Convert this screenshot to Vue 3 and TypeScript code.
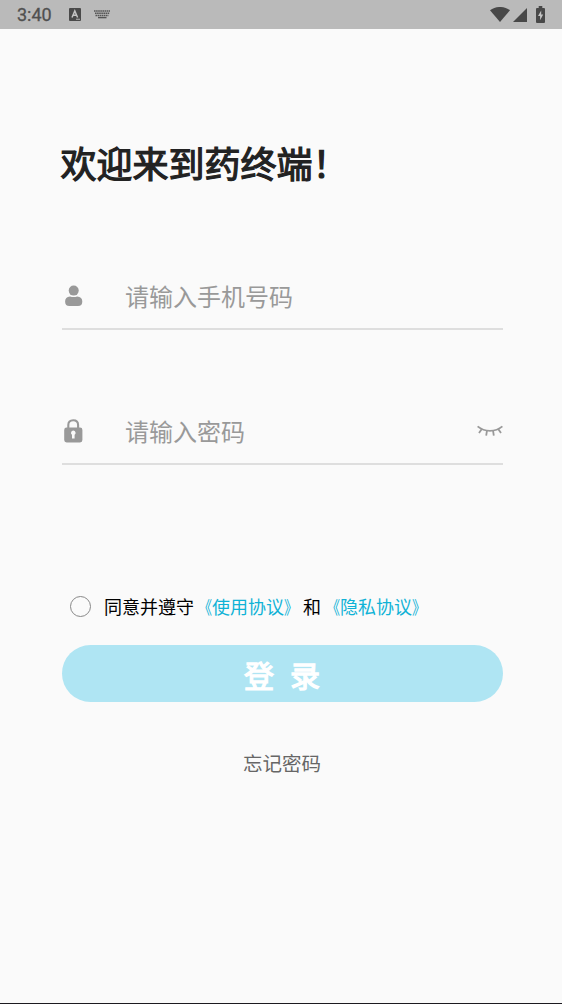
<script setup lang="ts">
import {ref} from "vue";

const phone = ref('')
const password = ref('')
const showPassword = ref(false)
const agreed = ref(false)
</script>

<template>
  <div class="page">
    <header class="status-bar">
      <span class="time">3:40</span>
      <svg class="app-icon" width="12" height="13" viewBox="0 0 12 13">
        <rect width="12" height="13" rx="1" fill="#4a4a4a"/>
        <path d="M3 9.5 L5.8 3 L8.6 9.5 M4 7.3 H7.6" fill="none" stroke="#c4c4c4" stroke-width="1.5"/>
        <path d="M7 11.3 H11" stroke="#a0a0a0" stroke-width="1.2"/>
      </svg>
      <svg class="keyboard-icon" width="16" height="9" viewBox="0 0 16 9">
        <g fill="none" stroke="#555" stroke-width="1.4">
          <path d="M0 1 H16" stroke-dasharray="1.6 .5"/>
          <path d="M1 3.3 H15.5" stroke-dasharray="1.6 .5"/>
          <path d="M1.5 5.5 H14.5" stroke-dasharray="1.6 .5"/>
          <path d="M4 7.6 H12.5"/>
        </g>
      </svg>
      <div class="system-icons">
        <svg width="20" height="15" viewBox="0 0 20 15">
          <path d="M0 3.2 C5.8 -1.1 14.2 -1.1 20 3.2 L10 15 Z" fill="#484848"/>
        </svg>
        <svg class="signal" width="14" height="14" viewBox="0 0 14 14">
          <path d="M14 0 V14 H0 Z" fill="#484848"/>
        </svg>
        <svg class="battery" width="9" height="17" viewBox="0 0 9 17">
          <path d="M2.7 0 H6.3 V2 H8 Q9 2 9 3 V16 Q9 17 8 17 H1 Q0 17 0 16 V3 Q0 2 1 2 H2.7 Z" fill="#484848"/>
          <path d="M5.2 4.5 L2 10 H4.1 V14.3 L7.2 8.6 H5.2 Z" fill="#c4c4c4"/>
        </svg>
      </div>
    </header>

    <main class="login">
      <h1>欢迎来到药终端！</h1>

      <label class="field">
        <svg class="field-icon" width="22" height="26" viewBox="0 0 22 26">
          <circle cx="11.7" cy="7.6" r="5" fill="#999"/>
          <path d="M8 13.4 Q11.6 14.4 15.2 13.4 Q20.3 13.7 20.3 18.4 Q20.3 22.9 16 22.9 H7.4 Q3.1 22.9 3.1 18.4 Q3.1 13.7 8 13.4 Z" fill="#999"/>
        </svg>
        <input v-model="phone" type="tel" placeholder="请输入手机号码">
      </label>

      <label class="field password">
        <svg class="field-icon" width="22" height="26" viewBox="0 0 22 26">
          <path d="M6.3 11 V7 Q6.3 2.2 11.2 2.2 Q16.1 2.2 16.1 7 V11" fill="none" stroke="#999" stroke-width="2.1"/>
          <rect x="2.2" y="9.6" width="18.2" height="14.8" rx="2.4" fill="#999"/>
          <path d="M11.3 12.6 a2.3 2.3 0 0 1 1.3 4.2 V20.6 H10 V16.8 a2.3 2.3 0 0 1 1.3 -4.2" fill="#fafafa"/>
        </svg>
        <input v-model="password" :type="showPassword ? 'text' : 'password'" placeholder="请输入密码">
        <svg class="eye" width="26" height="12" viewBox="0 0 26 12" @click="showPassword = !showPassword">
          <g fill="none" stroke="#999" stroke-width="1.8">
            <path d="M.6 1.4 Q6 5.8 13 5.8 Q20 5.8 25.4 1.4"/>
            <path d="M4.8 4 L2 8 M10 5.4 L9.2 10.6 M16 5.4 L16.8 10.6 M21.2 4 L24 8"/>
          </g>
        </svg>
      </label>

      <div class="agreement">
        <span class="radio" :class="{checked: agreed}" @click="agreed = !agreed"></span>
        <span>同意并遵守</span>
        <a><i class="open">《</i>使用协议<i class="close">》</i></a>
        <span class="and">和</span>
        <a><i class="open">《</i>隐私协议<i class="close">》</i></a>
      </div>

      <button class="submit"><span>登</span><span>录</span></button>
      <a class="forgot">忘记密码</a>
    </main>
  </div>
</template>

<style>
body {
  margin: 0;
  background: #fafafa;
}
</style>

<style scoped>
.page {
  height: 1004px;
  box-sizing: border-box;
  background: #fafafa;
  border-bottom: 1px solid #1c1a20;
  font-family: "Noto Sans CJK SC", sans-serif;
}

.status-bar {
  display: flex;
  align-items: center;
  height: 29px;
  padding: 0 16px 0 17px;
  box-sizing: border-box;
  background: #bababa;
}

.time {
  width: 52px;
  font: 400 18px/29px Roboto, sans-serif;
  -webkit-text-stroke: .3px #505050;
  color: #505050;
}

.keyboard-icon {
  margin-left: 13px;
}

.system-icons {
  display: flex;
  align-items: center;
  margin-left: auto;
  margin-right: 1px;
}

.signal {
  margin-left: 3px;
}

.battery {
  margin-left: 9px;
}

.login {
  display: flex;
  flex-direction: column;
  padding: 106px 59.5px 0 61.5px;
}

h1 {
  margin: 0 0 0 -1px;
  height: 54px;
  font-size: 36px;
  line-height: 54px;
  font-weight: 400;
  -webkit-text-stroke: 1.2px #222;
  color: #222;
  white-space: nowrap;
}

.field {
  display: flex;
  align-items: center;
  height: 66px;
  margin-top: 75px;
  box-sizing: border-box;
  border-bottom: 2px solid #dedede;
}

.password {
  margin-top: 69px;
}

.field-icon {
  margin-right: 41.5px;
}

input {
  flex: 1;
  min-width: 0;
  height: 40px;
  padding: 0 0 2px;
  box-sizing: border-box;
  border: none;
  outline: none;
  background: transparent;
  font-family: inherit;
  font-size: 24px;
  font-weight: 400;
  color: #222;
}

input::placeholder {
  color: #999;
  opacity: 1;
}

.agreement {
  display: flex;
  align-items: center;
  height: 28px;
  margin: 127px 0 0 8px;
  font-size: 18px;
  line-height: 28px;
  color: #000;
  white-space: nowrap;
}

.agreement a {
  color: #10b2d6;
}

/* condensed book-title marks */
.agreement i {
  display: inline-block;
  font-style: normal;
  transform: scaleX(.78);
}

.agreement .open {
  transform-origin: right;
}

.agreement .close {
  transform-origin: left;
}

.and {
  margin: 0 1px;
}

.radio {
  width: 21px;
  height: 21px;
  margin-right: 13.5px;
  box-sizing: border-box;
  border: 1px solid #888;
  border-radius: 50%;
}

.radio.checked {
  background: #18b4d8;
}

.submit {
  display: flex;
  align-items: center;
  justify-content: center;
  gap: 16px;
  height: 57px;
  margin-top: 25px;
  padding: 0;
  border: none;
  border-radius: 29px;
  background: #afe5f3;
  font-family: inherit;
  font-size: 30px;
  font-weight: 400;
  -webkit-text-stroke: 1.3px #fff;
  color: #fff;
}

.forgot {
  align-self: center;
  margin-top: 47px;
  font-size: 19.5px;
  line-height: 28px;
  color: #666;
}
</style>
